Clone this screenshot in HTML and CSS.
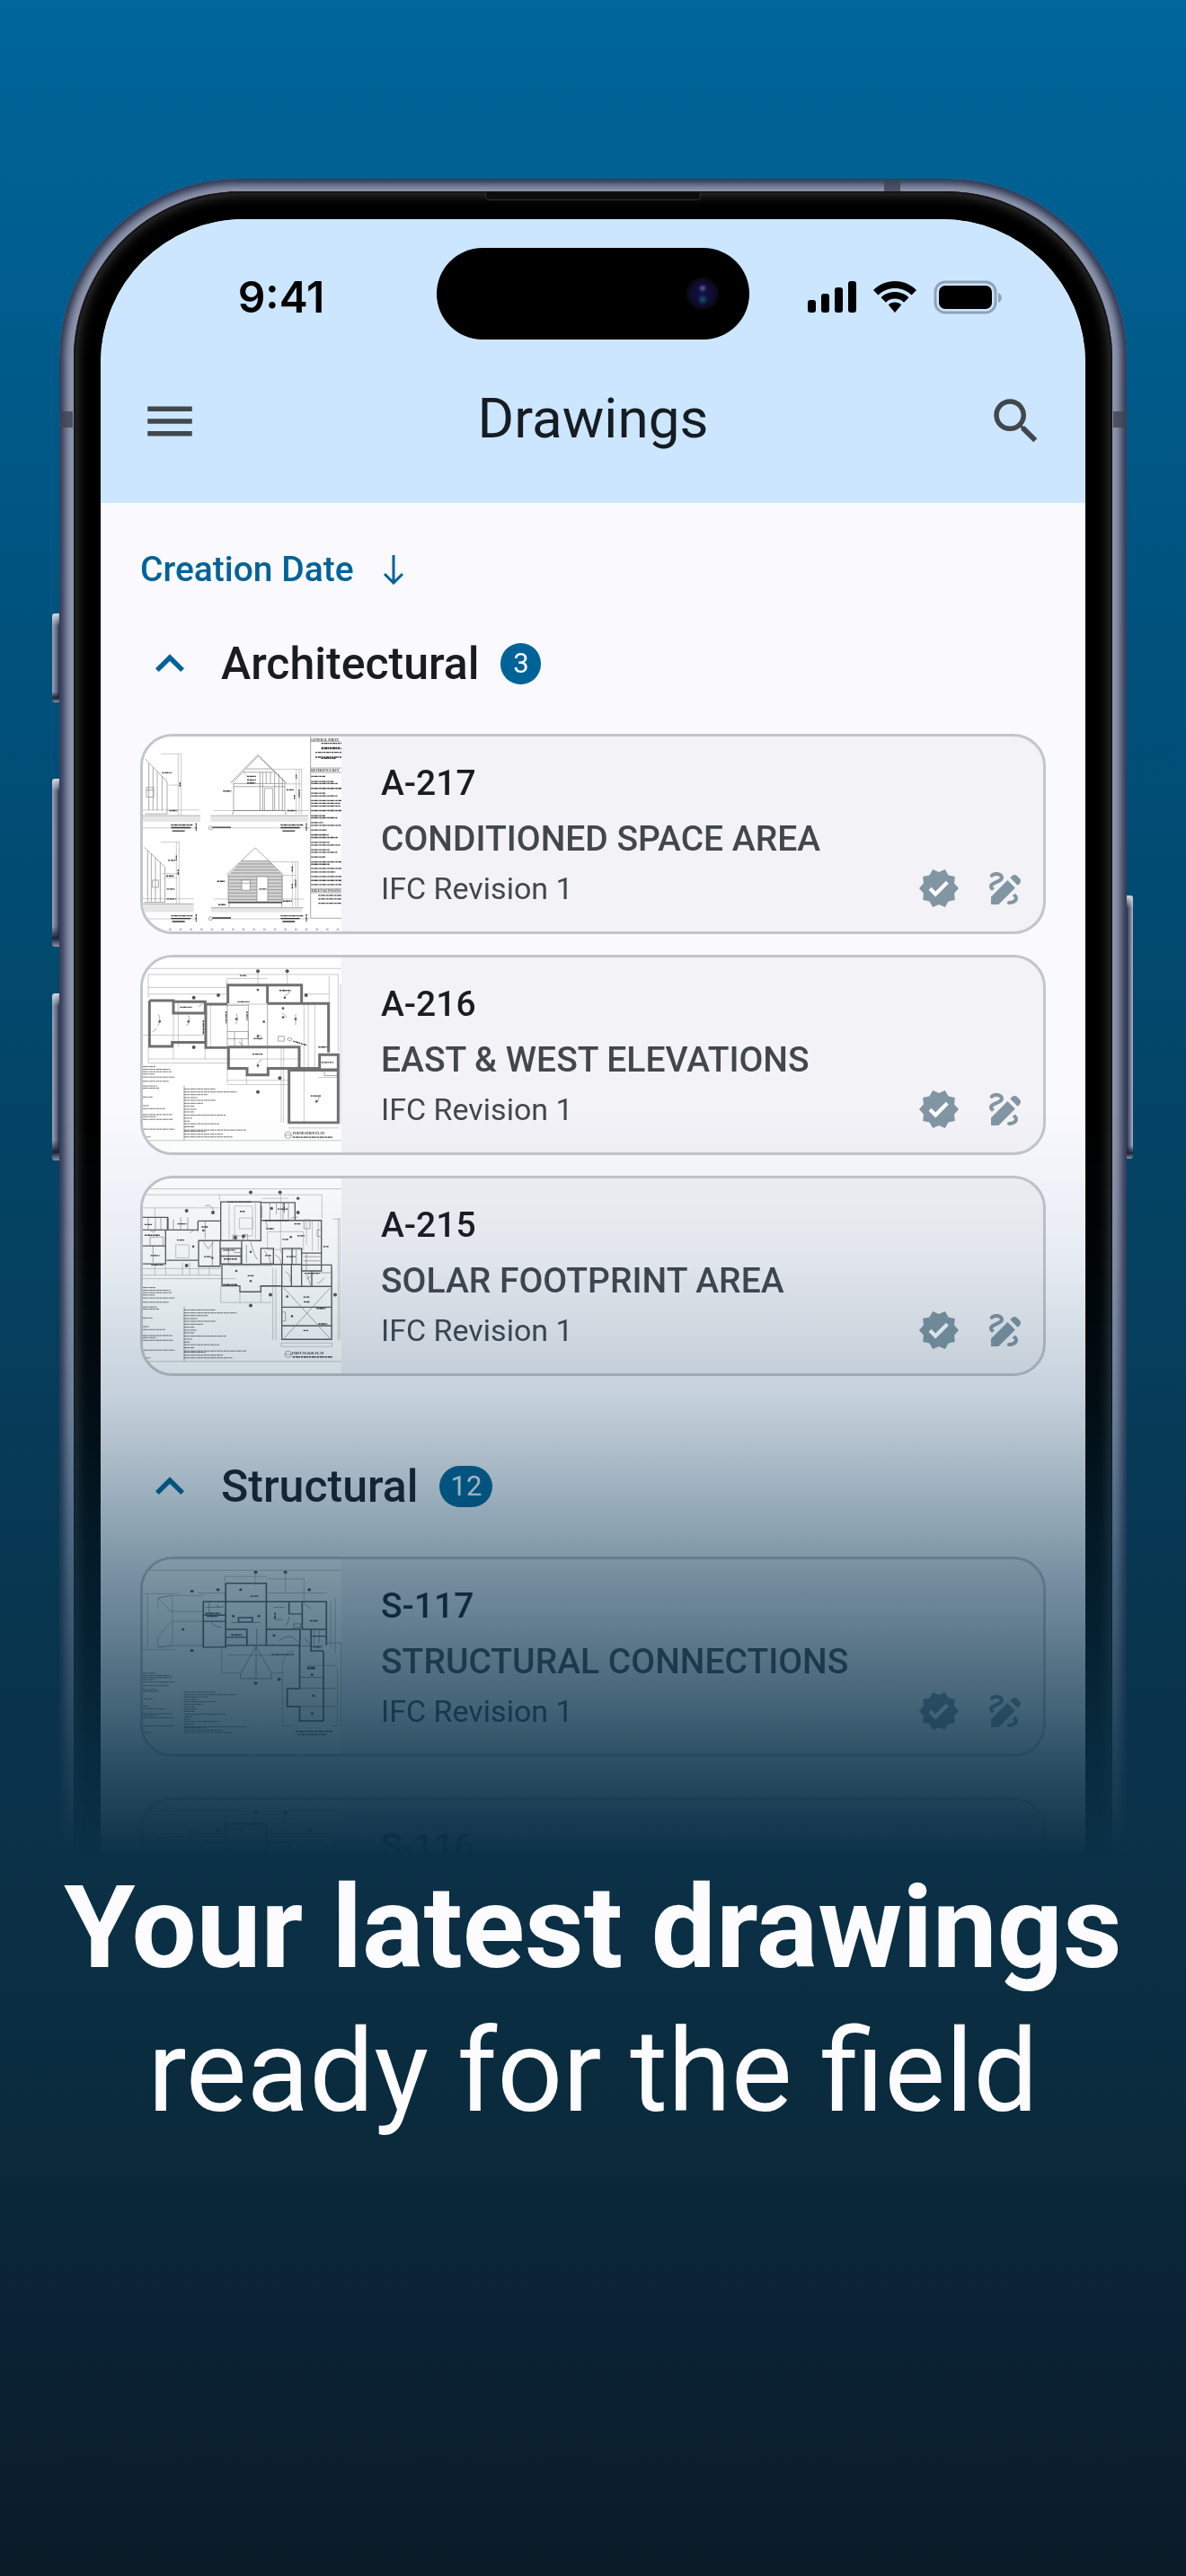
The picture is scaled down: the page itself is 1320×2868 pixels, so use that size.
FILE: index.html
```html
<!DOCTYPE html>
<html lang="en">
  <head>
    <meta charset="UTF-8" />
    <meta name="viewport" content="width=device-width, initial-scale=1.0" />
    <title>Drawings</title>
    <link rel="stylesheet" href="styles.css">
  </head>
  <body>
    <!-- shared icons and sheet previews -->
    <svg class="defs" aria-hidden="true">
      <symbol id="icon-chevron" viewBox="0 0 24 24">
        <path d="M12 8l-6 6 1.41 1.41L12 10.83l4.59 4.58L18 14z" />
      </symbol>
      <symbol id="icon-verified" viewBox="0 0 24 24">
        <path d="M23 12l-2.44-2.79.34-3.69-3.61-.82-1.89-3.2L12 2.96 8.6 1.5 6.71 4.69 3.1 5.5l.34 3.7L1 12l2.44 2.79-.34 3.7 3.61.82L8.6 22.5l3.4-1.47 3.4 1.46 1.89-3.19 3.61-.82-.34-3.69L23 12z" />
        <path class="tick" d="M10.09 16.72l-3.8-3.81 1.48-1.48 2.32 2.33 5.85-5.87 1.48 1.48-7.33 7.35z" />
      </symbol>
      <symbol id="icon-draw" viewBox="0 0 24 24">
        <path d="M18.85 10.39l1.06-1.06c.78-.78.78-2.05 0-2.83L18.5 5.09c-.78-.78-2.05-.78-2.83 0l-1.06 1.06 4.24 4.24zm-5.66-2.83L4 16.76V21h4.24l9.19-9.19-4.24-4.25zM19 17.5c0 2.19-2.54 3.5-5 3.5-.55 0-1-.45-1-1s.45-1 1-1c1.54 0 3-.73 3-1.5 0-.47-.48-.87-1.23-1.2l1.48-1.48c1.07.63 1.75 1.47 1.75 2.68zM4.58 13.35C3.61 12.79 3 12.06 3 11c0-1.8 1.89-2.63 3.56-3.36C7.59 7.18 9 6.56 9 6c0-.41-.78-1-2-1-1.26 0-1.8.61-1.83.64-.35.41-.98.46-1.4.12-.41-.34-.49-.95-.15-1.38C3.73 4.24 4.76 3 7 3s4 1.32 4 3c0 1.87-1.93 2.72-3.64 3.47C6.42 9.88 5 10.5 5 11c0 .31.43.6 1.07.86l-1.49 1.49z" />
      </symbol>

      <symbol id="sheet-notes" viewBox="0 0 350 260">
        <g class="scribble">
          <path d="M0 10h44M0 19h92M0 27h96M0 35h40M0 45h106M0 59h86M0 75h48M0 82h54M0 112h32M0 141h20M0 151h74M0 171h98M0 178h46M0 187h100M0 220h106M0 246h26" />
          <path d="M137 85h105M137 95h178M137 104h80M137 114h46M137 123h106M137 133h64M137 143h36M137 153h44M137 162h34M137 173h140M137 183h28M137 193h22M137 202h118M137 212h34M137 223h208M137 227h72M137 237h130M137 246h162" />
        </g>
      </symbol>

      <symbol id="sheet-elevations" viewBox="24 33 663 650" preserveAspectRatio="none">
        <rect class="hatch" x="24" y="300" width="192" height="18" />
        <rect class="hatch" x="250" y="300" width="326" height="18" />
        <rect class="hatch" x="24" y="592" width="170" height="26" />
        <rect class="hatch" x="252" y="605" width="304" height="14" />
        <path class="thin" d="M24 338h180M250 338h330M24 641h180M250 641h330M24 278h188M260 280h320M24 574h170M560 575h-300" />
        <path class="mid" d="M24 297h192M250 297h326M24 591h170M252 604h306" />
        <path class="mid" d="M32 108l73 75v108H32M44 122v158M58 136v144M72 150v130M88 166v114M36 203h24v32H36zM36 212h24" />
        <path class="mid" d="M28 402l70 66v118H28M40 414v170M52 424v160M66 438v146M82 452v132M56 512h20v24H56z" />
        <path class="thin" d="M84 91h68M142 91v206M152 91v206M84 385h62M136 385v206M145 385v206M110 195h44M92 504h46M88 490h58" />
        <path class="mid" d="M323 188l86-90 92 90M316 188l92-94 96 94M327 188v92h171v-92M370 141h80M360 152h100M327 190h171M327 200h171M415 152v128M424 152v128M436 152v38M450 152v38M464 152v128M478 158v122M490 172v108M430 206h28v74h-28zM323 294l4-14h171l4 14" />
        <path class="thin" d="M450 142h104M500 191h54M536 142v150M546 142v150M554 142v150M360 152l26 30M374 166h28" />
        <path class="shade" d="M309 494l46-46h90l46 46v92H309z" />
        <path class="mid" d="M304 494l95-90 94 90M309 494v92h180v-92M355 448h90M344 458h110M334 468h130M326 478h148M318 488h166M309 500h180M309 511h180M309 522h180M309 533h180M309 544h180M309 555h180M309 566h180M309 577h180" />
        <path class="blank" d="M405 500h36v84h-36zM354 512h28v34h-28z" />
        <path class="mid" d="M405 500h36v84h-36zM354 512h28v34h-28zM354 522h28M312 586v16M488 586v16" />
        <path class="heavy" d="M309 587h180" />
        <path class="thin" d="M440 451h104M490 496h46M523 451v150M534 451v150M542 451v150" />
        <path class="label" d="M88 154h32M112 280h28M148 186v14M292 215h28M372 166h30M372 178h30M372 188h28M504 211h24M506 280h30M530 228v14M546 210v28M536 160v14M104 575h30M108 446h28M102 498h26M104 542h28M412 542h26M272 516h26M276 594h24M492 582h30M523 466v18M523 524v16M534 510v28M142 476v18M136 430v14" />
        <path class="heavy" d="M118 337h66M484 337h64M118 640h66M484 640h64M256 336h62M256 638h62M122 348h42M490 348h42M122 650h42M490 650h42" />
        <path class="label" d="M118 328h72M484 328h76M118 631h72M484 631h76M202 322v26M570 322v26M202 625v26M570 625v26" />
        <path class="mid" d="M244 338a6 6 0 1 0 12 0a6 6 0 1 0-12 0M244 640a6 6 0 1 0 12 0a6 6 0 1 0-12 0M584 33v606h103M584 50h103M584 138h103M584 153h103M584 540h103M584 554h103" />
        <path class="label" d="M620 56h67M620 70h64M620 74h67M600 86h87M600 102h87M620 106h48M586 166h48M586 183h76M586 190h90M586 206h101M586 222h48M586 231h87M586 247h101M586 256h97M586 265h97M586 280h101M586 297h48M586 304h87M586 320h40M586 329h99M586 345h54M586 361h58M586 370h90M586 386h62M586 395h97M586 411h62M586 419h87M586 435h48M586 451h101M586 459h62M586 473h101M586 485h82M586 500h101M586 513h101M586 527h101M610 563h77M610 575h77M610 589h77" />
        <path class="ticks" d="M76 676h611" />
        <text class="note" x="586" y="48">GENERAL SHEET</text>
        <text class="note" x="586" y="150">REFERENCE KEY</text>
        <text class="note" x="586" y="552">SHEET KEYNOTES</text>
      </symbol>

      <symbol id="sheet-foundation" viewBox="54 49 663 655" preserveAspectRatio="none">
        <path class="thin" d="M54 86h663M54 664h663M72 106h634M72 106v80M706 106v260M72 150h262M334 120h136M334 120v20M676 112v90M72 172h262M590 172h86M536 100v44M438 100v44M72 352v52h264M156 240v150M262 352v40M72 390h264M336 352v120M336 476h206M400 446v30M336 462h206M516 350v254M524 350v254M54 310h210M592 206v400M606 206v218M628 206v218M340 206h130M470 350v76M344 390h230M640 452h70M714 138v470M540 622h168M172 200v150M280 206v144" />
        <path class="wall" d="M76 194h80v42h108v-30h72M76 194v154h76v-14h112v18h74M338 204v-62h132v62M474 142h110v62M160 198h102v36M264 206v146M470 204h204v164M340 352v70h62v22h70v-22h104v-72H338M644 376h62v50h-62zM542 428h164v176H542zM580 422h62" />
        <path class="mid" d="M406 206v144M336 206v144M336 298h70v24h-70M360 298v52M384 322v28M374 332l16 14M506 314h20v16h-20zM540 318l12 4-4 8-12-4zM470 208v140M466 350h108M660 426v20h44M334 210h70" />
        <path class="mid" d="M106 240q10 20-2 38M206 244q10 20-6 34M366 238q10 22-4 36M452 394q-22 6-12 26M640 512q6 20-10 26M434 308q24 4 10 20M528 178q14-6 18-16M240 214l14-10M564 240v36M520 236q14 10 12 16M86 300l14-12" />
        <path class="label" d="M178 216h40M510 160h38M420 374h36M614 514h36M370 198h40M424 322h30M256 260v46M332 230v40M402 230v30M650 402h40M556 330l44 14M640 350h30M378 110h22" />
        <g class="dot"><circle cx="438" cy="95" r="6" /><circle cx="536" cy="95" r="6" /><circle cx="306" cy="176" r="6" /><circle cx="599" cy="176" r="6" /><circle cx="224" cy="184" r="6" /><circle cx="224" cy="351" r="6" /><circle cx="438" cy="501" r="6" /><circle cx="511" cy="454" r="6" /><circle cx="438" cy="158" r="4" /><circle cx="110" cy="264" r="4" /><circle cx="206" cy="264" r="4" /><circle cx="366" cy="256" r="4" /><circle cx="564" cy="256" r="4" /><circle cx="522" cy="220" r="4" /><circle cx="522" cy="250" r="4" /><circle cx="438" cy="314" r="4" /><circle cx="438" cy="412" r="4" /><circle cx="634" cy="532" r="4" /><circle cx="528" cy="184" r="4" /><circle cx="458" cy="265" r="4" /></g>
        <use href="#sheet-notes" x="54" y="406" width="350" height="260" />
        <path class="mid" d="M192 480v184M528 646a11 11 0 1 0 22 0a11 11 0 1 0-22 0M528 646h22" />
        <path class="label" d="M554 653h134" />
        <text class="note" x="554" y="643">FOUNDATION PLAN</text>
      </symbol>

      <symbol id="sheet-floor" viewBox="54 787 663 655" preserveAspectRatio="none">
        <path class="thin" d="M54 822h663M54 1402h663M54 842h256M310 842h142M452 842h200M652 842v80M310 842v20M54 886h76M130 886h108M240 886h70M94 886v32M452 854h88M514 838v200M54 1112h260M94 1078v34M130 1078v34M186 1070v42M210 1070v42M240 1086v26M276 1086v26M54 1124h310M314 1150v54h170M378 1170v34M448 1150v54M488 1090v240M498 1090v240M706 920v410M712 920v410M688 924h26M516 1340h170v12H516zM440 1150h76M360 880h60v100h-60zM164 1010h44v44h-44zM376 920h44v36h-44zM470 966h120v60h-120zM346 1080h140M342 870v120M430 870v120M600 930v80M620 930v100M640 930v100M54 1090h260M686 1090v240" />
        <path class="plan" d="M54 918h82v42H54M54 1014h76v60H54M130 960v114M138 918v42h100v-30M134 1062h104M238 930h76M240 996h72v86h-72zM314 866h134v130H314zM448 868h114v60H448M448 928h202v74M650 1002v96h-66v-60h66M314 1022h68v52h-68zM314 1048h68M384 996v78M448 1022h42v52h-42zM520 1022h64v54h-64zM552 1022v54M318 1078v70h60v20h70v-20h70v-72H318M518 1100v50h166v-72h-100M550 1076v74M618 1100v50M584 1100v50M518 1150h166v178H518zM518 1220h166M518 1282h166M584 1076v22h66" />
        <path class="mid" d="M526 1156l152 168M678 1156l-152 168M72 918v42M96 918v42M114 920v40M78 960q10 14 20 0M88 1014v56M78 984h44v30H78zM156 924v36M180 918v42M204 918v42M210 970q20-16 30-4M256 1000l16 24 18-24M286 1000v80M262 880q20-10 28 16M262 930v60M460 930q14 10 6 24M478 868v60M500 868v40M522 868v60M540 868v60M548 922q14-10 24-4M354 978h14v18h-14zM388 976h16v20h-16zM352 996h56M340 1022v52M358 1036h24M400 1010v60M414 1000q10 40 22 60M460 1030q20 20 22 44M496 1044q20 10 18 30M566 1026v46M590 1050h60M590 1064h60M600 1040v56M630 1100q-20 20-30 26M660 1120q-10 16-24 20M640 1104h40M530 1100q20 10 16 34M520 1236h10v30h-10M600 1110q10 20 14 36M452 880v40M592 926h20v30h-20zM636 960h14v22h-14z" />
        <path class="label" d="M170 940h30M168 994h24M378 898h16M258 1050h24M466 956h26M520 992h20M570 980h24M560 940h20M60 942h24M80 1046h30M404 1114h20M590 1186h20M592 1202h18M634 1224h30M640 1276h30M590 1298h16M322 1028h40M324 1058h44M462 1046h20M534 1050h30M526 870v30M656 1016h18M594 1106h50M82 1078h40M60 978h50M250 950h22M336 866h80M462 928h80M504 890h34M322 1144h48M452 1148h60" />
        <g class="dot"><circle cx="414" cy="834" r="6" /><circle cx="512" cy="834" r="6" /><circle cx="572" cy="854" r="5" /><circle cx="572" cy="902" r="6" /><circle cx="288" cy="902" r="6" /><circle cx="200" cy="896" r="6" /><circle cx="200" cy="1080" r="6" /><circle cx="414" cy="1214" r="6" /><circle cx="480" cy="1178" r="6" /><circle cx="696" cy="1178" r="6" /><circle cx="536" cy="1184" r="4" /><circle cx="552" cy="1250" r="4" /><circle cx="222" cy="1016" r="4" /><circle cx="256" cy="962" r="4" /><circle cx="414" cy="1132" r="4" /><circle cx="414" cy="1034" r="4" /><circle cx="366" cy="1098" r="4" /><circle cx="484" cy="888" r="5" /><circle cx="548" cy="984" r="4" /><circle cx="390" cy="982" r="6" /><circle cx="362" cy="986" r="6" /><circle cx="286" cy="1054" r="4" /></g>
        <use href="#sheet-notes" x="54" y="1144" width="350" height="260" />
        <path class="mid" d="M192 1218v184M528 1378a11 11 0 1 0 22 0a11 11 0 1 0-22 0M528 1378h22" />
        <path class="label" d="M554 1387h134" />
        <text class="note" x="552" y="1378">FIRST FLOOR PLAN</text>
      </symbol>

      <symbol id="sheet-structure" viewBox="289 514 542 634" preserveAspectRatio="none">
        <path class="thin" d="M289 550h542M289 626h98M302 630v166M289 808h90M330 640l36 44M330 640v36M330 765v35M330 765l36-48M366 632h88M366 684h88M366 716h88M366 795h88M370 632v163M513 570h114M513 570v22M627 578h102v70M627 624h164M814 640v180M802 650v150M504 796v88h50M640 884h30M520 826h150M670 866v190h28M802 1056h28V786h-40M700 810q-30 10-30 56M734 860h84M820 866v190M596 550v50M678 550v70M440 624h74v30" />
        <path class="mid" d="M598 798l-42 86v18h84v-18zM598 798v104M330 640l36-8M330 800l36-5M718 796h64M682 934h134M682 993h134M718 898h64" />
        <path class="plan" d="M515 592h111v204M515 592v208h-61V652h60M626 652h164v142M626 742h92v38M790 742h-66v-90M454 696h60M454 716h60M515 742h58v52M515 794h202M717 780v155h-34v58h34v47h65V814M515 652h111M550 704h38v14h-38zM688 652v40M688 692h36M748 742v70h34M515 768h58M748 764h40" />
        <path class="mid" d="M470 656v38M490 664q12 10 20 4M474 716q10 20 30 20M688 700q0 20 -10 30M700 724h20v12h-20zM728 656l20 20M660 780q30-30 50 0M730 770l14 20M756 746v44M770 746v40M530 720h80M600 740v50M460 670h40M646 670h30M650 710h20" />
        <path class="label" d="M583 634h22M745 714h22M738 866h22M738 870h22M640 824h60M460 690h40M530 760h30M650 688v20M706 1074h100M712 1084h80M464 700h30M752 800h24" />
        <g class="dot"><circle cx="597" cy="556" r="5" /><circle cx="678" cy="556" r="5" /><circle cx="494" cy="613" r="5" /><circle cx="743" cy="613" r="5" /><circle cx="423" cy="618" r="5" /><circle cx="423" cy="811" r="5" /><circle cx="597" cy="917" r="5" /><circle cx="661" cy="905" r="5" /><circle cx="399" cy="742" r="4" /><circle cx="536" cy="699" r="4" /><circle cx="606" cy="699" r="4" /><circle cx="556" cy="613" r="4" /><circle cx="751" cy="890" r="4" /><circle cx="755" cy="958" r="4" /><circle cx="751" cy="1016" r="4" /><circle cx="647" cy="762" r="4" /></g>
        <use href="#sheet-notes" x="289" y="858" width="286" height="250" />
      </symbol>
    </svg>

    <main class="page">
      <div class="stage">
        <div class="phone">
          <span class="side-button action"></span>
          <span class="side-button volume-up"></span>
          <span class="side-button volume-down"></span>
          <span class="side-button power"></span>
          <span class="band band-left"></span>
          <span class="band band-right"></span>
          <span class="band band-top"></span>

          <div class="bezel">
            <span class="earpiece"></span>
            <div class="screen">
              <header class="app-header">
                <div class="status-bar">
                  <span class="time">9:41</span>
                  <span class="island"><span class="camera"></span></span>
                  <div class="status-icons">
                    <svg width="54" height="36" viewBox="0 0 54 36" aria-label="Signal">
                      <rect x="0" y="21" width="9" height="14" rx="3" />
                      <rect x="15" y="14" width="9" height="21" rx="3" />
                      <rect x="30" y="7" width="9" height="28" rx="3" />
                      <rect x="45" y="0" width="9" height="35" rx="3" />
                    </svg>
                    <svg width="48" height="36" viewBox="0 0 48 36" aria-label="Wi-Fi">
                      <path d="M24 0C33 0 41.500 3.500 48 10L42.500 15.500C37.500 10.500 31 8 24 8S10.500 10.500 5.500 15.500L0 10C6.500 3.500 15 0 24 0z" />
                      <path d="M24 12C30 12 35.500 14.300 39.500 18.200L34 23.700C31.300 21 27.900 19.600 24 19.600S16.700 21 14 23.700L8.500 18.200C12.500 14.300 18 12 24 12z" />
                      <path d="M24 23.600C26.800 23.600 29.300 24.600 31.200 26.400L24 35L16.800 26.400C18.700 24.600 21.200 23.600 24 23.600z" />
                    </svg>
                    <svg width="77" height="38" viewBox="0 0 77 38" aria-label="Battery">
                      <rect class="battery-case" x="2" y="2" width="67" height="34" rx="11" />
                      <rect x="6" y="6" width="59" height="26" rx="7" />
                      <path class="battery-tip" d="M72 14c5 2 5 9 0 11z" />
                    </svg>
                  </div>
                </div>
                <div class="title-bar">
                  <button class="icon-button" type="button" aria-label="Menu">
                    <svg viewBox="0 0 24 24"><path d="M3 18h18v-2H3v2zm0-5h18v-2H3v2zm0-7v2h18V6H3z" /></svg>
                  </button>
                  <h1>Drawings</h1>
                  <button class="icon-button" type="button" aria-label="Search">
                    <svg viewBox="0 0 24 24"><path d="M15.500 14h-.79l-.28-.27C15.410 12.590 16 11.110 16 9.500 16 5.910 13.090 3 9.500 3S3 5.910 3 9.500 5.910 16 9.500 16c1.610 0 3.090-.59 4.230-1.570l.27.28v.79l5 4.990L20.490 19l-4.990-5zm-6 0C7.010 14 5 11.990 5 9.500S7.010 5 9.500 5 14 7.010 14 9.500 11.990 14 9.500 14z" /></svg>
                  </button>
                </div>
              </header>

              <div class="content">
                <button class="sort" type="button">
                  Creation Date
                  <svg width="24" height="33" viewBox="0 0 24 33"><path d="M12 0v31M2 21l10 10 10-10" /></svg>
                </button>

                <section class="group">
                  <h2 class="group-title">
                    <svg class="chevron"><use href="#icon-chevron" /></svg>
                    Architectural
                    <span class="count">3</span>
                  </h2>
                  <div class="cards">
                    <a class="card" href="#a-217">
                      <svg class="thumb"><use href="#sheet-elevations" /></svg>
                      <div class="info">
                        <div class="number">A-217</div>
                        <div class="name">CONDITIONED SPACE AREA</div>
                        <div class="revision">IFC Revision 1</div>
                      </div>
                      <div class="badges">
                        <svg><use href="#icon-verified" /></svg>
                        <svg><use href="#icon-draw" /></svg>
                      </div>
                    </a>
                    <a class="card" href="#a-216">
                      <svg class="thumb"><use href="#sheet-foundation" /></svg>
                      <div class="info">
                        <div class="number">A-216</div>
                        <div class="name">EAST &amp; WEST ELEVATIONS</div>
                        <div class="revision">IFC Revision 1</div>
                      </div>
                      <div class="badges">
                        <svg><use href="#icon-verified" /></svg>
                        <svg><use href="#icon-draw" /></svg>
                      </div>
                    </a>
                    <a class="card" href="#a-215">
                      <svg class="thumb"><use href="#sheet-floor" /></svg>
                      <div class="info">
                        <div class="number">A-215</div>
                        <div class="name">SOLAR FOOTPRINT AREA</div>
                        <div class="revision">IFC Revision 1</div>
                      </div>
                      <div class="badges">
                        <svg><use href="#icon-verified" /></svg>
                        <svg><use href="#icon-draw" /></svg>
                      </div>
                    </a>
                  </div>
                </section>

                <section class="group">
                  <h2 class="group-title">
                    <svg class="chevron"><use href="#icon-chevron" /></svg>
                    Structural
                    <span class="count">12</span>
                  </h2>
                  <div class="cards cards-loose">
                    <a class="card" href="#s-117">
                      <svg class="thumb"><use href="#sheet-structure" /></svg>
                      <div class="info">
                        <div class="number">S-117</div>
                        <div class="name">STRUCTURAL CONNECTIONS</div>
                        <div class="revision">IFC Revision 1</div>
                      </div>
                      <div class="badges">
                        <svg><use href="#icon-verified" /></svg>
                        <svg><use href="#icon-draw" /></svg>
                      </div>
                    </a>
                    <a class="card card-cut" href="#s-116">
                      <svg class="thumb"><use href="#sheet-structure" /></svg>
                      <div class="info">
                        <div class="number">S-116</div>
                      </div>
                    </a>
                  </div>
                </section>
              </div>
            </div>
          </div>
        </div>
      </div>

      <p class="headline"><strong>Your latest drawings</strong><br />ready for the field</p>
    </main>
  </body>
</html>
```
FILE: styles.css
```css
* {
  box-sizing: border-box;
}
body {
  margin: 0;
  font-family: Roboto, "Liberation Sans", sans-serif;
  color: #191c20;
  background: #0a1a27;
}
.page {
  min-height: 100vh;
  overflow: hidden;
  background: linear-gradient(#00669b 0%, #00507a 27%, #05405f 50%, #08344d 64%, #0b3148 72%, #0a2a3c 83%, #0a2538 87%, #0b1b28 100%);
}
.defs {
  position: absolute;
  width: 0;
  height: 0;
}

/* phone */
.stage {
  padding: 199px 5% 0;
  -webkit-mask-image: linear-gradient(#000 1240px, rgba(0, 0, 0, 0.93) 1400px, rgba(0, 0, 0, 0.78) 1560px, rgba(0, 0, 0, 0.64) 1650px, rgba(0, 0, 0, 0.49) 1740px, rgba(0, 0, 0, 0.39) 1810px, rgba(0, 0, 0, 0.25) 1900px, rgba(0, 0, 0, 0.15) 1960px, rgba(0, 0, 0, 0.05) 2030px, transparent 2070px);
  mask-image: linear-gradient(#000 1240px, rgba(0, 0, 0, 0.93) 1400px, rgba(0, 0, 0, 0.78) 1560px, rgba(0, 0, 0, 0.64) 1650px, rgba(0, 0, 0, 0.49) 1740px, rgba(0, 0, 0, 0.39) 1810px, rgba(0, 0, 0, 0.25) 1900px, rgba(0, 0, 0, 0.15) 1960px, rgba(0, 0, 0, 0.05) 2030px, transparent 2070px);
}
.phone {
  position: relative;
  padding: 14px 16px 0;
  border-radius: 200px 200px 0 0;
  background: #8d95ab;
  box-shadow: inset 0 0 9px 6px #2c3350;
}
.bezel {
  position: relative;
  padding: 31px 30px 0;
  border-radius: 186px 186px 0 0;
  background: #000;
  box-shadow: inset 0 0 0 2px #14161c, inset 0 0 14px 3px #403f3e;
}
.screen {
  overflow: hidden;
  border-radius: 160px 160px 0 0;
  background: #f9f9fe;
}
.earpiece {
  position: absolute;
  top: 1px;
  left: 50%;
  width: 240px;
  height: 9px;
  margin-left: -120px;
  border: 1px solid #333;
  border-top: 0;
  border-radius: 0 0 5px 5px;
  background: #0d0d0d;
}
.side-button {
  position: absolute;
  left: -8px;
  width: 8px;
  border-radius: 3px 0 0 3px;
  background: linear-gradient(#d5d9df, transparent 14px, transparent 88%, #1c2238 95%, #8d94a6), linear-gradient(90deg, #9aa4b6, #59627e 70%, #272d48);
}
.action {
  top: 484px;
  height: 99px;
}
.volume-up {
  top: 668px;
  height: 187px;
}
.volume-down {
  top: 907px;
  height: 186px;
}
.power {
  top: 798px;
  right: -7px;
  left: auto;
  width: 7px;
  height: 293px;
  border-radius: 0 3px 3px 0;
  background: linear-gradient(#d5d9df, transparent 14px, transparent 95%, #1c2238 98%, #8d94a6), linear-gradient(270deg, #aab2c2, #59627e 60%, #272d48);
}
.band {
  position: absolute;
  background: rgba(62, 66, 82, 0.8);
}
.band-left,
.band-right {
  top: 259px;
  width: 15px;
  height: 18px;
}
.band-left {
  left: 0;
}
.band-right {
  right: 0;
}
.band-top {
  top: 2px;
  right: 252px;
  width: 18px;
  height: 12px;
}

/* header */
.app-header {
  background: #cce6ff;
}
.status-bar {
  display: grid;
  grid-template-columns: 1fr 348px 1fr;
  align-items: center;
  padding-top: 32px;
}
.time {
  padding: 8px 0 0 28px;
  font-family: Inter, Roboto, sans-serif;
  font-size: 48px;
  font-weight: 600;
  line-height: 60px;
  text-align: center;
  color: #000;
}
.island {
  display: flex;
  align-items: center;
  justify-content: flex-end;
  height: 102px;
  padding-right: 34px;
  border-radius: 51px;
  background: #000;
}
.camera {
  width: 36px;
  height: 36px;
  border: 3px solid #0b0914;
  border-radius: 50%;
  background: radial-gradient(circle at 50% 30%, #5a5a9e 0, transparent 5px), radial-gradient(circle at 50% 72%, #12556a 0, transparent 6px), radial-gradient(circle, #11114c 0, #0e0c2c 60%, #0d0a1c 100%);
}
.status-icons {
  display: flex;
  align-items: center;
  justify-content: center;
  gap: 19px;
  padding: 8px 28px 0 0;
}
.battery-case {
  fill: none;
  stroke: #8fa3ba;
  stroke-width: 3px;
}
.battery-tip {
  fill: #8fa3ba;
}
.title-bar {
  display: flex;
  align-items: center;
  justify-content: space-between;
  height: 182px;
  padding: 0 44px;
}
.title-bar h1 {
  margin: 0;
  padding-bottom: 6px;
  font-size: 62px;
  font-weight: 400;
  line-height: 72px;
  color: #151c22;
}
.icon-button {
  width: 66px;
  height: 66px;
  padding: 0;
  border: 0;
  background: none;
}
.icon-button svg {
  display: block;
  width: 66px;
  height: 66px;
  fill: #41484d;
}

/* list */
.content {
  padding: 44px 44px 0;
}
.sort {
  display: flex;
  align-items: center;
  gap: 32px;
  padding: 0;
  border: 0;
  background: none;
  font-family: inherit;
  font-size: 39px;
  font-weight: 500;
  line-height: 60px;
  color: #006397;
}
.sort svg {
  fill: none;
  stroke: #006397;
  stroke-width: 3px;
}
.group {
  padding-top: 43px;
}
.group + .group {
  padding-top: 91px;
}
.group-title {
  display: flex;
  align-items: center;
  gap: 24px;
  margin: 0 0 46px;
  font-size: 50px;
  font-weight: 500;
  line-height: 64px;
}
.chevron {
  width: 66px;
  height: 64px;
  fill: #006397;
}
.count {
  min-width: 45px;
  padding: 0 12px;
  border-radius: 23px;
  background: #006397;
  font-size: 31px;
  font-weight: 400;
  line-height: 46px;
  text-align: center;
  color: #f9f9fe;
}
.cards {
  display: flex;
  flex-direction: column;
  gap: 23px;
}
.cards-loose {
  gap: 45px;
}
.card {
  display: flex;
  overflow: hidden;
  border: 3px solid #c2c6ca;
  border-radius: 36px;
  background: #f3f2f7;
  color: inherit;
  text-decoration: none;
}
.thumb {
  flex: none;
  width: 221px;
  height: 217px;
  background: #fff;
}
.info {
  flex: 1;
  padding: 21px 0 24px 44px;
}
.number,
.name {
  font-size: 39px;
  font-weight: 500;
  line-height: 62px;
}
.name,
.revision {
  color: #42474e;
}
.revision {
  font-size: 34px;
  line-height: 48px;
}
.badges {
  display: flex;
  align-items: flex-end;
  gap: 26px;
  padding: 0 18px 24px 0;
}
.badges svg {
  width: 48px;
  height: 48px;
  fill: #8295a2;
}
.tick {
  fill: #fff;
}
.card-cut {
  height: 130px;
}

/* sheet previews */
.thin,
.mid,
.plan,
.wall,
.heavy,
.label,
.scribble,
.ticks {
  fill: none;
  stroke: #555;
  stroke-width: 2px;
}
.thin {
  stroke: #b0b0b0;
}
.mid {
  stroke: #808080;
}
.plan {
  stroke: #5c5c5c;
  stroke-width: 4px;
}
.wall {
  stroke: #707070;
  stroke-width: 9px;
}
.heavy {
  stroke: #333;
  stroke-width: 4px;
}
.label {
  stroke: #444;
  stroke-width: 4px;
  stroke-dasharray: 7px 2px 11px 1px 4px 2px;
}
.scribble {
  stroke: #777;
  stroke-width: 3px;
  stroke-dasharray: 12px 1px 7px 2px;
}
.ticks {
  stroke: #b5b5b5;
  stroke-width: 6px;
  stroke-dasharray: 8px 27px;
}
.hatch {
  fill: #e6e6e6;
}
.shade {
  fill: #d2d2d2;
}
.blank {
  fill: #fff;
}
.dot {
  fill: #555;
}
.note {
  font-family: "Liberation Serif", serif;
  font-size: 11px;
  font-weight: 700;
  fill: #333;
}

.headline {
  margin: -65px 0 0;
  font-size: 128px;
  line-height: 160px;
  text-align: center;
  color: #fcfcff;
}
.headline strong {
  font-weight: 700;
}
```
